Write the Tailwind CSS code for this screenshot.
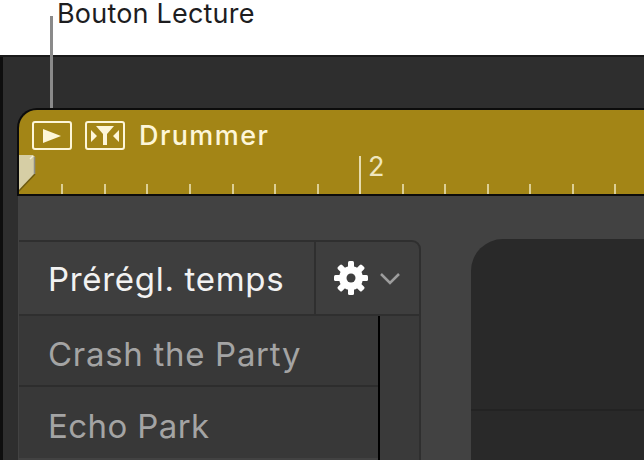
<!DOCTYPE html>
<html lang="fr">
<head>
  <meta charset="UTF-8" />
  <title>Bouton Lecture</title>
  <script src="https://cdn.jsdelivr.net/npm/@tailwindcss/browser@4"></script>
</head>
<body class="w-[644px] h-[460px] overflow-hidden bg-white font-['Inter',sans-serif]">
  <div class="relative w-[644px] h-[460px] flex flex-col">
    <!-- callout -->
    <header class="h-[55px] shrink-0 bg-white pl-[57px]">
      <span class="block text-[27px] leading-[28px] tracking-[0.2px] text-[#1d1d1f]">Bouton Lecture</span>
    </header>
    <div class="absolute left-[50px] top-[16px] w-[3px] h-[105px] bg-[#8a8a8a]"></div>

    <main class="flex-1 flex border-t-2 border-[#1a1a1a] bg-[#2e2e2e] min-h-0">
      <div class="w-[3px] shrink-0 bg-[#0e0e0e]"></div>
      <div class="flex-1 flex flex-col pt-[51px] pl-[15px] min-w-0">
        <!-- region -->
        <section class="relative h-[88px] -ml-[1px] shrink-0 bg-[#a38516] border-2 border-r-0 border-[#0c0c0c] rounded-tl-[20px] overflow-hidden">
          <div class="flex items-center h-[31px] mt-[10px] pl-[13px]">
            <button class="w-[40px] h-[29px] border-2 border-[#fdf6d8] rounded-[3px] flex items-center justify-center">
              <svg width="18" height="14" viewBox="0 0 18 14"><path d="M0 0l18 7L0 14z" fill="#fdf6d8"/></svg>
            </button>
            <button class="ml-[13px] w-[40px] h-[29px] border-2 border-[#fdf6d8] rounded-[3px] flex items-center justify-center">
              <svg width="34" height="24" viewBox="0 0 34 24" fill="#fdf6d8"><path d="M8 2h18l-7 8v11h-4V10z"/><path d="M3 6l6 6-6 6zM31 6l-6 6 6 6z"/></svg>
            </button>
            <span class="ml-[14px] text-[27px] leading-[30px] tracking-[1.4px] font-medium text-[#fdf6d8]">Drummer</span>
          </div>
          <svg class="absolute left-[1px] top-0" width="625" height="84" viewBox="0 0 625 84" stroke="#dccf94" stroke-width="2">
            <path d="M42 74v10M85 74v10M127 74v10M170 74v10M213 74v10M255 74v10M298 74v10M383 74v10M425 74v10M468 74v10M510 74v10M553 74v10M595 74v10"/>
            <path d="M340 46v38" stroke="#e6dcae"/>
          </svg>
          <span class="absolute left-[349px] top-[42px] text-[27px] leading-[30px] text-[#efe6bd]">2</span>
          <!-- playhead flag -->
          <svg class="absolute left-[-2px] top-[44px]" width="20" height="40" viewBox="0 0 20 40"><path d="M0 1h16l2 2v17L1 38H0z" fill="#d6cea5"/><path d="M18 20L1 38" stroke="#6f5b10" stroke-width="1.500"/><path d="M17.500 3v17" stroke="#8f8f88" stroke-width="1.500"/><path d="M13 5l3-3" stroke="#f5f1dc" stroke-width="1.500"/></svg>
        </section>

        <!-- editor -->
        <section class="flex-1 flex bg-[#424242] min-h-0">
          <div class="w-[403px] shrink-0 flex flex-col pt-[44px]">
            <div class="h-[76px] shrink-0 flex bg-[#3e3e3e] border-y-2 border-r-2 border-[#2f2f2f] rounded-tr-[9px] ml-[1px]">
              <div class="w-[297px] pl-[29px] pt-[3px] flex items-center border-r-2 border-[#2f2f2f] text-[33px] tracking-[0.7px] text-[#f2f2f2]">Prérégl. temps</div>
              <div class="flex-1 flex items-center pl-[18px] gap-[12px]">
                <svg width="34" height="34" viewBox="0 0 34 34">
                  <g fill="#ffffff">
                    <circle cx="17" cy="17" r="12"/>
                    <rect x="14" y="0" width="6" height="34" rx="1.500"/>
                    <rect x="14" y="0" width="6" height="34" rx="1.500" transform="rotate(45 17 17)"/>
                    <rect x="14" y="0" width="6" height="34" rx="1.500" transform="rotate(90 17 17)"/>
                    <rect x="14" y="0" width="6" height="34" rx="1.500" transform="rotate(135 17 17)"/>
                  </g>
                  <circle cx="17" cy="17" r="4.500" fill="#3e3e3e"/>
                </svg>
                <svg width="20" height="13" viewBox="0 0 20 13" fill="none" stroke="#9d9d9d" stroke-width="2.500"><path d="M1 2l9 9 9-9"/></svg>
              </div>
            </div>
            <div class="flex-1 flex ml-[1px] min-h-0 border-r-2 border-[#2f2f2f]">
              <ul class="w-[361px] shrink-0 border-r-2 border-black text-[33px] tracking-[0.7px] text-[#a4a4a4]">
                <li class="h-[71px] pl-[29px] pt-[8px] flex items-center bg-[#383838] border-b-2 border-[#2d2d2d]">Crash the Party</li>
                <li class="h-[71px] pl-[29px] pt-[8px] flex items-center bg-[#383838] tracking-[0.4px]">Echo Park</li>
              </ul>
              <div class="flex-1 bg-[#3a3a3a]"></div>
            </div>
          </div>
          <div class="flex-1 pl-[50px] pt-[43px] min-w-0">
            <div class="h-full bg-[#292929] rounded-tl-[32px] flex flex-col">
              <div class="h-[172px] shrink-0 border-b-2 border-[#232323]"></div>
            </div>
          </div>
        </section>
      </div>
    </main>
  </div>
</body>
</html>
